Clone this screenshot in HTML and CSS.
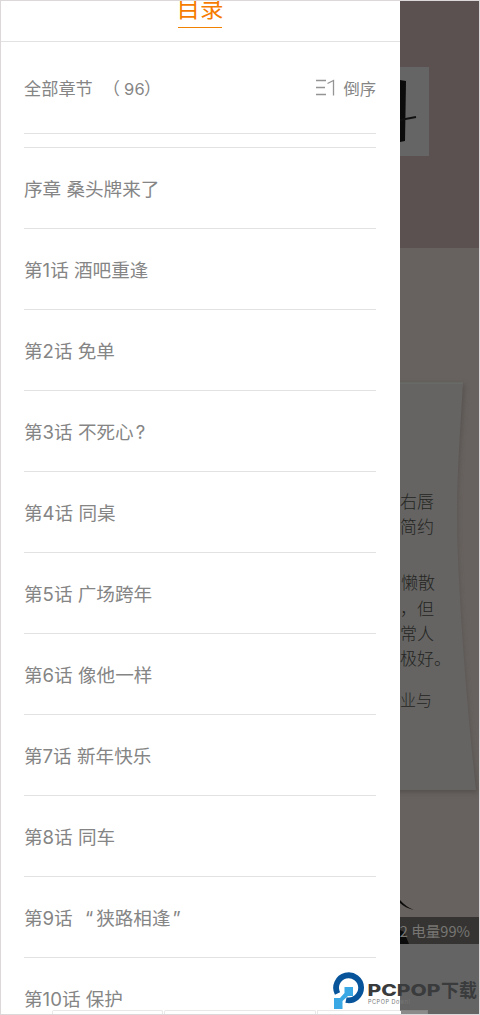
FILE: index.html
```html
<!DOCTYPE html>
<html lang="zh-CN">
<head>
<meta charset="utf-8">
<title>目录</title>
<link rel="stylesheet" href="styles.css">
</head>
<body>
<div class="screen">
  <aside class="drawer">
    <header class="drawer-head"><span class="tab">目录</span></header>
    <div class="summary">
      <span class="count">全部章节<span class="num">（<i>96</i>）</span></span>
      <span class="sort">
        <svg class="sort-icon" viewBox="0 0 20 17"><path d="M1 1.500H11M1 8.500H10M1 15.500H11M12.500 4.500L18.500 1.500V16.500"/></svg>
        倒序
      </span>
    </div>
    <ul class="chapters">
      <li>序章 桑头牌来了</li>
      <li>第1话 酒吧重逢</li>
      <li>第2话 免单</li>
      <li>第3话 不死心<span class="ask">?</span></li>
      <li>第4话 同桌</li>
      <li>第5话 广场跨年</li>
      <li>第6话 像他一样</li>
      <li>第7话 新年快乐</li>
      <li>第8话 同车</li>
      <li>第9话 <span class="quote">“</span>狭路相逢<span class="endquote">”</span></li>
      <li>第10话 保护</li>
    </ul>
  </aside>
  <main class="reader">
    <section class="cover">
      <svg class="title-card" viewBox="0 0 29 89"><path class="ink" d="M0 13L6 14 5 74 0 75Z"/><path class="stroke" d="M0 53L16 50"/></svg>
    </section>
    <section class="page">
      <svg class="paper" viewBox="0 0 79 697">
        <defs><filter id="soft" x="-20%" y="-10%" width="140%" height="120%"><feGaussianBlur stdDeviation="2.500"/></filter></defs>
        <path d="M-10 136H65C59 225 55 250 59 330C63 410 70 490 78 545H-10Z" fill="#514c4a" opacity=".7" filter="url(#soft)"/>
        <path d="M-10 135H63C58 220 55 255 59 330C63 410 70 485 76 542H-10Z" fill="#656462"/>
        <path d="M0 135H63" stroke="#6b706a"/>
        <path class="ink" d="M0 652Q6 659 14 662Q5 660 0 655Z"/>
      </svg>
      <div class="prose">
        <p>右唇</p>
        <p>简约</p>
        <p class="next wide">懒散</p>
        <p>，但</p>
        <p>常人</p>
        <p class="stop">极好<span class="period">。</span></p>
        <p class="next last">业与</p>
      </div>
      <div class="status"><svg class="hair" viewBox="0 0 10 27"><path class="ink" d="M0 13L4 15 9 27H0Z"/></svg><span>2 电量99%</span></div>
    </section>
  </main>
  <div class="bottom-tabs"><span></span><span></span><span></span></div>
  <svg class="watermark" viewBox="0 0 148 38">
    <path d="M4.500 21.500A12.500 12.500 0 1 1 13 28" fill="none" stroke="#07549b" stroke-width="5.800"/>
    <path d="M11.500 15H20V24H15L9.500 29V37H1V26H7L11.500 21Z" fill="#39a8e5"/>
    <text class="brand" x="34.500" y="24" textLength="73" lengthAdjust="spacingAndGlyphs">PCPOP</text>
    <text class="brand cjk" x="108" y="25" textLength="36" lengthAdjust="spacingAndGlyphs">下载</text>
    <text class="sub" x="35" y="31.500" textLength="42">PCPOP Downl</text>
  </svg>
</div>
</body>
</html>
```
FILE: styles.css
```css
* { box-sizing: border-box; }
body { margin: 0; font-family: Inter, "Noto Sans CJK SC", sans-serif; color: #858585; }
.screen { position: relative; display: flex; width: 480px; height: 1015px; overflow: hidden; border: 1px solid #dcd8d9; background: #fff; }
.drawer { flex: 0 0 399px; background: #fff; overflow: hidden; }
.drawer-head { display: flex; justify-content: center; align-items: flex-end; height: 41px; padding-bottom: 13px; border-bottom: 1px solid #e2e2e2; }
.tab { display: flex; justify-content: center; width: 44px; margin-left: -1px; padding-bottom: 1px; border-bottom: 1.500px solid #f18200; color: #f57c00; font-size: 23.500px; line-height: 34px; white-space: nowrap; }
.summary { display: flex; justify-content: space-between; align-items: center; height: 92px; margin: 0 24px 0 23px; border-bottom: 1px solid #e2e2e2; font-size: 17.200px; }
.count { display: flex; align-items: baseline; }
.sort { display: flex; align-items: center; }
.num { display: flex; align-items: baseline; margin-left: 10px; }
.num i { font-style: normal; font-size: 16.500px; letter-spacing: .3px; margin: 0 -1px 0 4px; }
.num { margin-right: -4px; }
.sort { font-size: 16.300px; }
.sort-icon { width: 20px; height: 17px; margin-right: 8px; fill: none; stroke: #949494; stroke-width: 1.300; }
.chapters { list-style: none; margin: 13px 24px 0 23px; padding: 0; border-top: 1px solid #e2e2e2; }
.chapters li { height: 81px; line-height: 80px; padding-top: 1px; border-bottom: 1px solid #e2e2e2; font-size: 18.600px; white-space: nowrap; }
.ask { margin-left: 2px; }
.quote { margin: 0 3px 0 7px; }
.endquote { margin-left: 2px; }
.reader { flex: 1; min-width: 0; display: flex; flex-direction: column; background: #646464; overflow: hidden; }
.cover { height: 247px; padding-top: 66px; background: #5b5151; }
.title-card { display: block; width: 29px; height: 89px; background: #656565; }
.ink { fill: #0c0b0b; }
.stroke { stroke: #111; stroke-width: 2; }
.page { position: relative; height: 696px; background: #67625f; display: flex; flex-direction: column; justify-content: space-between; padding-top: 240px; }
.paper { position: absolute; left: 0; top: 0; width: 79px; height: 697px; }
.prose { position: relative; color: #242423; font-family: "Noto Sans CJK SC", sans-serif; font-weight: 300; font-size: 17px; line-height: 25.200px; }
.prose p { display: flex; justify-content: flex-end; margin: 0; padding-right: 45px; white-space: nowrap; }
.prose .next { margin-top: 31px; }
.prose .wide { padding-right: 44px; }
.prose .stop { justify-content: flex-start; padding: 0; }
.prose .last { justify-content: flex-start; margin-top: 17px; padding: 0; font-size: 16px; }
.status { position: relative; display: flex; justify-content: flex-end; align-items: center; height: 27px; padding-right: 9px; background: #353432; color: #777673; font-family: "Noto Sans CJK SC", sans-serif; font-size: 14.600px; white-space: nowrap; }
.hair { position: absolute; left: 0; top: 0; width: 10px; height: 27px; }
.status span { position: relative; }
.bottom-tabs { position: absolute; left: 51px; bottom: 0; display: flex; gap: 1px; }
.bottom-tabs span { width: 111px; height: 4px; border: 1px solid #e8e8e8; border-bottom: 0; border-radius: 2px 2px 0 0; }
.bottom-tabs span:nth-child(2) { width: 152px; }
.bottom-tabs span:nth-child(3) { background: linear-gradient(90deg, #fff 83px, #8b8b8b 83px); border-image: linear-gradient(90deg, #e8e8e8 83px, #858585 83px) 1; }
.watermark { position: absolute; left: 332px; top: 971px; width: 148px; height: 38px; }
.brand { font: 800 16px Inter, sans-serif; fill: #3a3b3c; }
.cjk { font: 700 18px "Noto Sans CJK SC", sans-serif; }
.sub { font: 5.500px Inter, sans-serif; fill: #777; }
```
